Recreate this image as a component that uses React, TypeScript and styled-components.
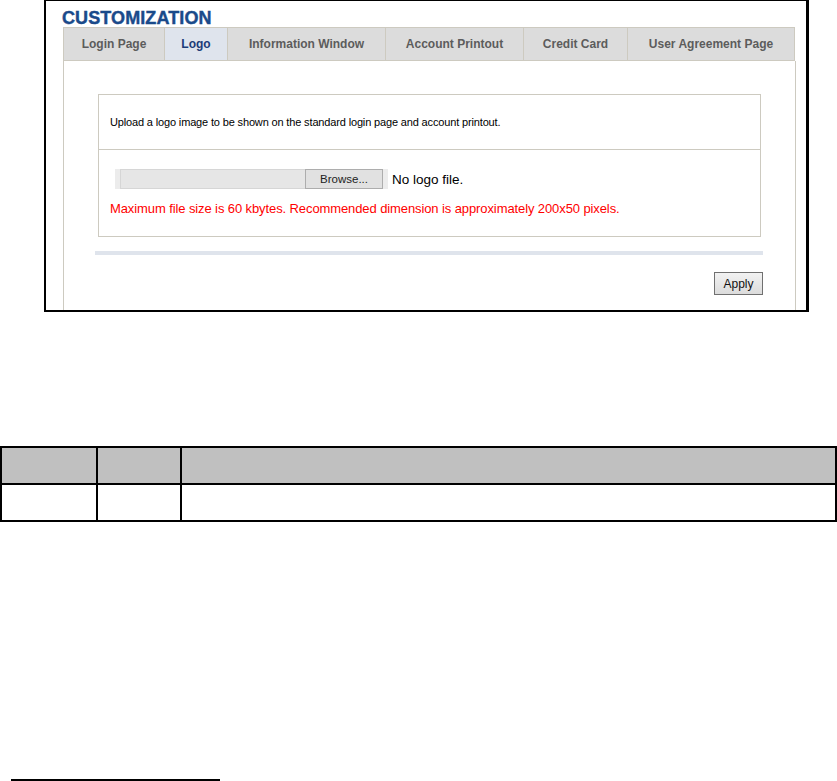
import React from 'react';
import styled, { createGlobalStyle } from 'styled-components';

const GlobalStyle = createGlobalStyle`
	html, body {
		margin: 0;
		padding: 0;
		background: #ffffff;
		font-family: "Liberation Sans", Arial, sans-serif;
	}
`;

const tabs = [
	{ label: 'Login Page', width: 102 },
	{ label: 'Logo', width: 63, active: true },
	{ label: 'Information Window', width: 158 },
	{ label: 'Account Printout', width: 138 },
	{ label: 'Credit Card', width: 104 },
	{ label: 'User Agreement Page', width: 167 },
];

const App: React.FunctionComponent = () => {
	return (
		<Page>
			<GlobalStyle />
			<Frame>
				<Title>CUSTOMIZATION</Title>
				<TabBar>
					{tabs.map((t) => (
						<Tab key={t.label} $width={t.width} $active={!!t.active}>
							{t.label}
						</Tab>
					))}
				</TabBar>
				<Panel>
					<Section>
						<IntroRow>
							Upload a logo image to be shown on the standard login page and account printout.
						</IntroRow>
						<UploadRow>
							<FileLine>
								<FilePicker>
									<FileField />
									<BrowseButton>Browse...</BrowseButton>
								</FilePicker>
								<FileStatus>No logo file.</FileStatus>
							</FileLine>
							<Warning>
								Maximum file size is 60 kbytes. Recommended dimension is approximately 200x50 pixels.
							</Warning>
						</UploadRow>
					</Section>
					<Divider />
					<Actions>
						<ApplyButton>Apply</ApplyButton>
					</Actions>
				</Panel>
			</Frame>
			<FieldTable>
				<thead>
					<tr>
						<HeadCell $width={94} />
						<HeadCell $width={82} />
						<HeadCell />
					</tr>
				</thead>
				<tbody>
					<tr>
						<BodyCell />
						<BodyCell />
						<BodyCell />
					</tr>
				</tbody>
			</FieldTable>
			<FootnoteRule />
		</Page>
	);
};

const Page = styled.div`
	width: 837px;
	height: 781px;
	overflow: hidden;
	display: flex;
	flex-direction: column;
	& > * {
		flex-shrink: 0;
	}
`;

const Frame = styled.div`
	box-sizing: border-box;
	margin-left: 44px;
	width: 765px;
	height: 312px;
	border-style: solid;
	border-color: #000;
	border-width: 1px 3px 2px 2px;
	padding: 8px 0 0 17px;
	overflow: hidden;
`;

const Title = styled.div`
	margin-left: -1px;
	font-size: 18px;
	line-height: 18px;
	font-weight: bold;
	color: #1a4a8a;
	letter-spacing: 0.1px;
	-webkit-text-stroke: 0.4px #1a4a8a;
`;

const TabBar = styled.div`
	display: flex;
	width: 733px;
`;

const Tab = styled.div<{ $width: number; $active: boolean }>`
	box-sizing: border-box;
	width: ${(p) => p.$width}px;
	height: 34px;
	display: flex;
	align-items: center;
	justify-content: center;
	border: 1px solid #cdcac0;
	border-left: none;
	background: ${(p) => (p.$active ? '#dfe4ed' : '#dcdcdc')};
	color: ${(p) => (p.$active ? '#1c3c78' : '#5c5c5c')};
	font-size: 12px;
	font-weight: bold;
	&:first-child {
		border-left: 1px solid #cdcac0;
	}
`;

const Panel = styled.div`
	box-sizing: border-box;
	width: 733px;
	height: 300px;
	border-left: 1px solid #cdcac0;
	border-right: 1px solid #cdcac0;
	padding: 33px 0 0 31px;
`;

const Section = styled.div`
	box-sizing: border-box;
	margin-left: 3px;
	width: 663px;
	border: 1px solid #cdcac0;
`;

const IntroRow = styled.div`
	height: 54px;
	display: flex;
	align-items: center;
	padding-left: 11px;
	border-bottom: 1px solid #cdcac0;
	font-size: 11px;
	letter-spacing: -0.15px;
	color: #000;
`;

const UploadRow = styled.div`
	height: 86px;
	padding: 19px 0 0 11px;
	box-sizing: border-box;
`;

const FileLine = styled.div`
	display: flex;
	align-items: center;
	gap: 4px;
`;

const FilePicker = styled.div`
	display: flex;
	align-items: center;
	background: #ececec;
	padding: 0 5px;
	height: 20px;
	margin-left: 5px;
`;

const FileField = styled.div`
	width: 184px;
	height: 18px;
	background: #e6e6e6;
	border: 1px solid #d6d6d6;
	border-right: none;
`;

const BrowseButton = styled.div`
	box-sizing: border-box;
	width: 78px;
	height: 20px;
	background: #e1e1e1;
	border: 1px solid #adadad;
	font-size: 11.5px;
	color: #222;
	display: flex;
	align-items: center;
	justify-content: center;
`;

const FileStatus = styled.span`
	font-size: 13.5px;
	color: #000;
`;

const Warning = styled.div`
	margin-top: 12px;
	font-size: 13px;
	color: #ff0000;
	letter-spacing: -0.1px;
`;

const Divider = styled.div`
	margin-top: 14px;
	width: 668px;
	height: 4px;
	background: #dfe4ec;
`;

const Actions = styled.div`
	width: 668px;
	display: flex;
	justify-content: flex-end;
	margin-top: 17px;
`;

const ApplyButton = styled.div`
	box-sizing: border-box;
	width: 49px;
	height: 23px;
	border: 1px solid #707070;
	background: linear-gradient(#f2f2f2, #dcdcdc);
	font-size: 12px;
	color: #111;
	display: flex;
	align-items: center;
	justify-content: center;
`;

const FieldTable = styled.table`
	margin-top: 134px;
	width: 837px;
	border-collapse: collapse;
	table-layout: fixed;
	border: 2px solid #000;
`;

const HeadCell = styled.th<{ $width?: number }>`
	width: ${(p) => (p.$width ? `${p.$width}px` : 'auto')};
	height: 35px;
	background: #c0c0c0;
	border: 2px solid #000;
	padding: 0;
`;

const BodyCell = styled.td`
	height: 35px;
	border: 2px solid #000;
	padding: 0;
`;

const FootnoteRule = styled.div`
	margin: 257px 0 0 11px;
	width: 209px;
	height: 2px;
	background: #000;
`;

export default App;
